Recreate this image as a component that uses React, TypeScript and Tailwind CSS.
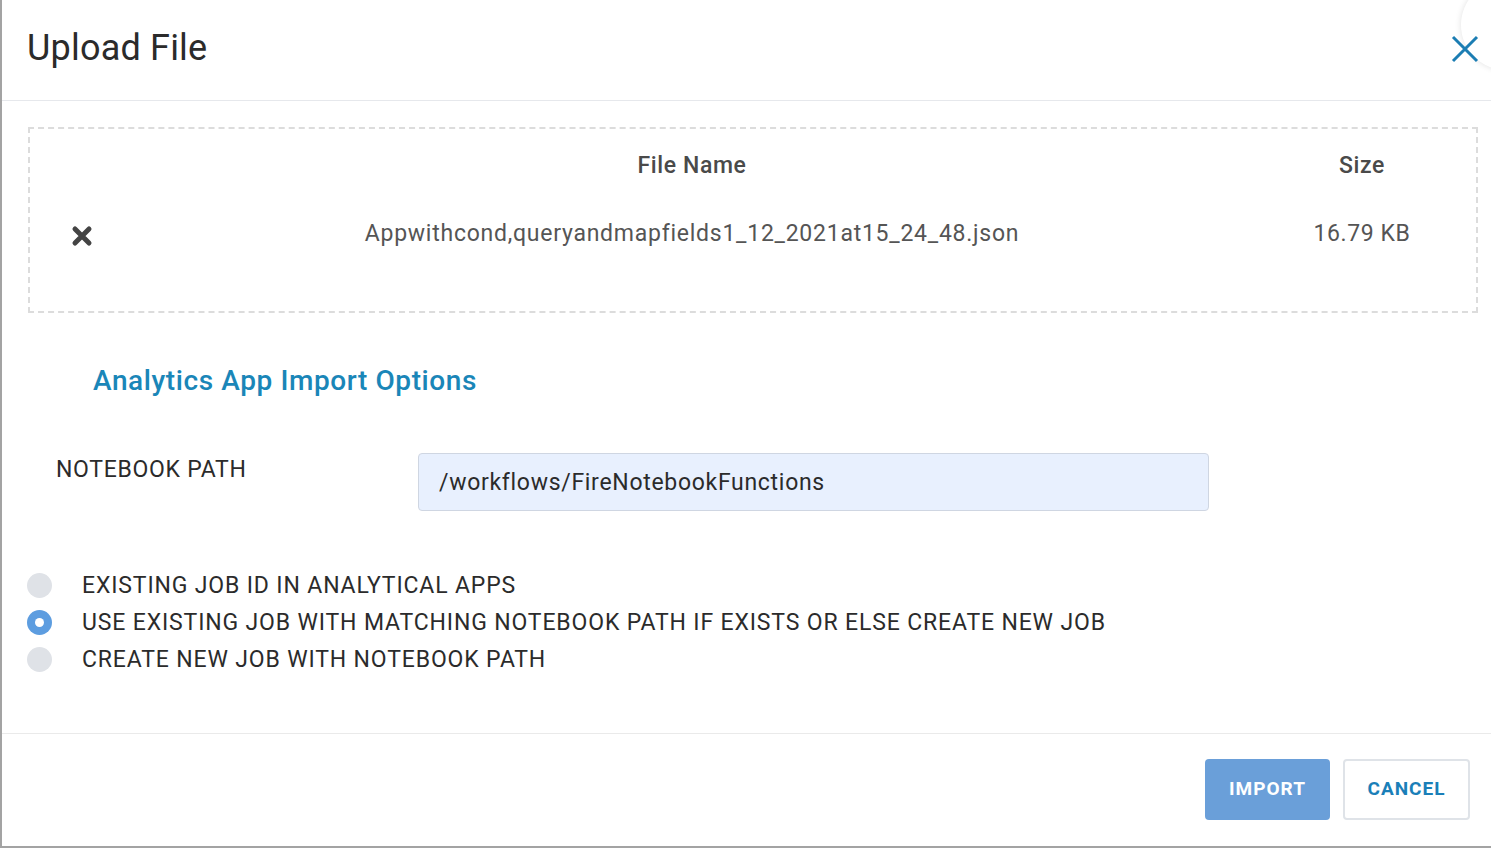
import React, { useState } from "react";

const options = [
  "EXISTING JOB ID IN ANALYTICAL APPS",
  "USE EXISTING JOB WITH MATCHING NOTEBOOK PATH IF EXISTS OR ELSE CREATE NEW JOB",
  "CREATE NEW JOB WITH NOTEBOOK PATH",
];

const App: React.FC = () => {
  const [selected, setSelected] = useState(1);
  const [path, setPath] = useState("/workflows/FireNotebookFunctions");

  return (
    <div
      className="relative w-[1491px] h-[848px] overflow-hidden bg-white border-l-2 border-b-2 border-[#a3a3a3] flex flex-col"
      style={{ fontFamily: "Roboto, 'Liberation Sans', sans-serif" }}
    >
      {/* corner shadow at top right */}
      <div className="absolute -right-[60px] -top-[20px] w-[90px] h-[90px] rounded-full bg-white shadow-[0_0_6px_rgba(0,0,0,0.12)]" />

      {/* Header */}
      <div className="relative flex items-center justify-between h-[101px] border-b border-[#e6e8ec] pl-[25px] pr-[11px]">
        <h1 className="text-[36px] leading-none text-[#2b2b2b] tracking-[0.2px] -mt-[4px]">Upload File</h1>
        <button className="w-[30px] h-[30px] flex items-center justify-center -mt-[2px]" aria-label="Close">
          <svg width="28" height="28" viewBox="0 0 28 28">
            <path d="M2 2 L26 26 M26 2 L2 26" stroke="#1b7db3" strokeWidth="3" fill="none" />
          </svg>
        </button>
      </div>

      {/* Body */}
      <div className="flex-1 flex flex-col">
        {/* File table */}
        <div className="mt-[26px] ml-[26px] mr-[13px] h-[186px] border-2 border-dashed border-[#dcdcdc] text-[#4a4a4a]">
          <div className="grid grid-cols-[106px_1fr_228px] pt-[22px]">
            <div />
            <div className="text-center text-[23px] font-medium leading-[30px] tracking-[0.6px]">File Name</div>
            <div className="text-center text-[23px] font-medium leading-[30px] tracking-[0.6px]">Size</div>
          </div>
          <div className="grid grid-cols-[106px_1fr_228px] items-center mt-[38px]">
            <div className="flex justify-center">
              <svg width="24" height="24" viewBox="0 0 24 24" className="mt-[4px] -ml-[2px]">
                <path d="M5 5 L19 19 M19 5 L5 19" stroke="#444" strokeWidth="5" strokeLinecap="round" fill="none" />
              </svg>
            </div>
            <div className="text-center text-[23px] leading-[30px] text-[#555] tracking-[0.75px]">
              Appwithcond,queryandmapfields1_12_2021at15_24_48.json
            </div>
            <div className="text-center text-[23px] leading-[30px] text-[#555] tracking-[0.6px]">16.79 KB</div>
          </div>
        </div>

        {/* Import options */}
        <h2 className="mt-[50px] pl-[91px] text-[28px] leading-[36px] font-medium text-[#1a86b8] tracking-[0.6px]">
          Analytics App Import Options
        </h2>

        <div className="flex items-start mt-[54px]">
          <label className="pl-[54px] w-[416px] pt-[2px] text-[23px] leading-[30px] text-[#2b2b2b] tracking-[0.7px]">
            NOTEBOOK PATH
          </label>
          <input
            value={path}
            onChange={(e) => setPath(e.target.value)}
            className="w-[791px] h-[58px] rounded-[4px] border border-[#cfd6e2] bg-[#e8f0fe] px-[20px] text-[23px] text-[#2b2b2b] tracking-[0.7px] outline-none"
          />
        </div>

        <div className="flex flex-col mt-[56px]">
          {options.map((opt, i) => (
            <div
              key={opt}
              className="flex items-center h-[37px] pl-[25px] cursor-pointer"
              onClick={() => setSelected(i)}
            >
              {selected === i ? (
                <span className="w-[25px] h-[25px] rounded-full bg-[#5d9de0] flex items-center justify-center">
                  <span className="w-[9px] h-[9px] rounded-full bg-white" />
                </span>
              ) : (
                <span className="w-[25px] h-[25px] rounded-full bg-[#dfe2e7]" />
              )}
              <span className="ml-[30px] text-[23px] leading-[30px] text-[#2b2b2b] tracking-[0.85px]">{opt}</span>
            </div>
          ))}
        </div>
      </div>

      {/* Footer */}
      <div className="h-[113px] border-t border-[#eaeaea] flex justify-end items-start pt-[25px] pr-[21px] gap-[13px]">
        <button className="w-[125px] h-[61px] rounded-[4px] bg-[#6a9fd9] text-white text-[19px] font-bold tracking-[1px]">
          IMPORT
        </button>
        <button className="w-[127px] h-[61px] rounded-[4px] border-2 border-[#dfe3e8] bg-white text-[#1a7fb8] text-[19px] font-bold tracking-[1px]">
          CANCEL
        </button>
      </div>
    </div>
  );
};

export default App;
